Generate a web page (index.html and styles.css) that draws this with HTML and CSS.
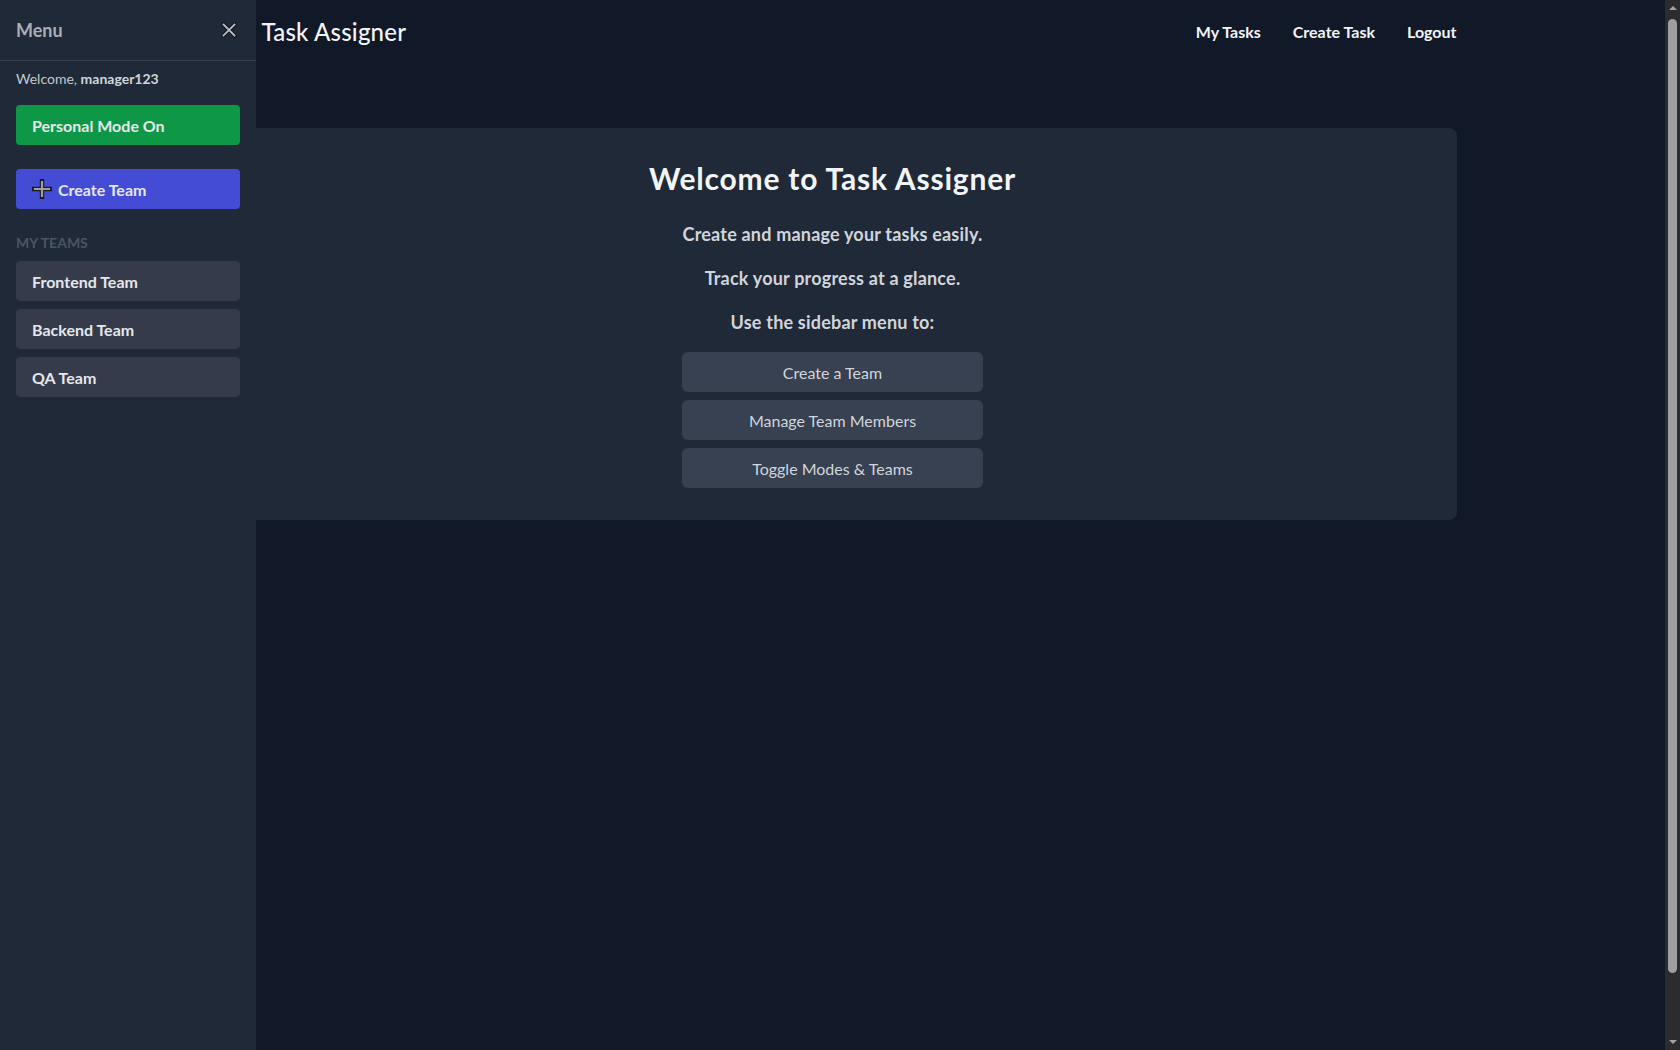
FILE: index.html
```html
<!DOCTYPE html>
<html lang="en">
<head>
<meta charset="utf-8">
<title>Task Assigner</title>
<link rel="stylesheet" href="styles.css">
</head>
<body>
<div class="page">
<header class="topbar">
  <div class="topbar-inner">
    <div class="brand">
      <button class="burger" aria-label="Open menu">
        <svg width="24" height="24" viewBox="0 0 24 24" fill="none" stroke="currentColor" stroke-width="2"><path d="M4 6h16M4 12h16M4 18h16"/></svg>
      </button>
      <span class="brand-title">Task Assigner</span>
    </div>
    <nav class="nav">
      <a class="nav-link" href="#">My Tasks</a>
      <a class="nav-link" href="#">Create Task</a>
      <a class="nav-link" href="#">Logout</a>
    </nav>
  </div>
</header>

<main class="main">
  <section class="card">
    <h1 class="card-title">Welcome to Task Assigner</h1>
    <p class="card-text">Create and manage your tasks easily.</p>
    <p class="card-text">Track your progress at a glance.</p>
    <p class="card-text">Use the sidebar menu to:</p>
    <div class="card-actions">
      <button class="action">Create a Team</button>
      <button class="action">Manage Team Members</button>
      <button class="action">Toggle Modes &amp; Teams</button>
    </div>
  </section>
</main>
</div>

<aside class="sidebar">
  <div class="sidebar-head">
    <span class="sidebar-title">Menu</span>
    <button class="close" aria-label="Close menu">
      <svg width="16" height="16" viewBox="0 0 16 16">
        <path d="M2.5 2.5 L13.5 13.5 M13.5 2.5 L2.5 13.5" stroke="#111" stroke-width="3.6" stroke-linecap="square"/>
        <path d="M2.5 2.5 L13.5 13.5 M13.5 2.5 L2.5 13.5" stroke="#b8bcc4" stroke-width="1.8" stroke-linecap="square"/>
      </svg>
    </button>
  </div>
  <div class="sidebar-body">
    <p class="welcome">Welcome, <strong>manager123</strong></p>
    <button class="btn btn-green">Personal Mode On</button>
    <button class="btn btn-indigo">
      <svg class="plus" width="20" height="20" viewBox="0 0 20 20">
        <path d="M10 2 V18 M2 10 H18" stroke="#1a1a1a" stroke-width="4.4" stroke-linecap="square"/>
        <path d="M10 3 V17 M3 10 H17" stroke="#a0a0a0" stroke-width="2.2" stroke-linecap="square"/>
      </svg>
      Create Team
    </button>
    <h2 class="section-label">My Teams</h2>
    <ul class="team-list">
      <li><button class="btn btn-team">Frontend Team</button></li>
      <li><button class="btn btn-team">Backend Team</button></li>
      <li><button class="btn btn-team">QA Team</button></li>
    </ul>
  </div>
</aside>

<div class="scrollbar" aria-hidden="true">
  <span class="sb-arrow sb-up"></span>
  <span class="sb-thumb"></span>
  <span class="sb-arrow sb-down"></span>
</div>
</body>
</html>
```

FILE: styles.css
```css
* { box-sizing: border-box; }

html, body {
  margin: 0;
  padding: 0;
}

body {
  background: #111827;
  color: #e5e7eb;
  font-family: "Lato", "Noto Sans", "Liberation Sans", sans-serif;
}

.page {
  margin-right: 15px;
  min-height: calc(100vh + 92px);
}

button {
  font-family: inherit;
  cursor: pointer;
}

/* Header */
.topbar-inner {
  max-width: 1280px;
  margin: 0 auto;
  padding: 0 16px;
  height: 64px;
  display: flex;
  align-items: center;
  justify-content: space-between;
}

.brand {
  display: flex;
  align-items: center;
  gap: 13px;
}

.burger {
  width: 40px;
  height: 40px;
  padding: 8px;
  background: transparent;
  border: 0;
  color: #e5e7eb;
}

.brand-title {
  font-size: 24px;
  font-weight: 500;
  color: #f3f4f6;
  line-height: 32px;
  letter-spacing: 0.2px;
}

.nav {
  display: flex;
  gap: 32px;
}

.nav-link {
  color: #f3f4f6;
  text-decoration: none;
  font-size: 16px;
  font-weight: 700;
  line-height: 24px;
}

/* Main */
.main {
  max-width: 1280px;
  margin: 0 auto;
  padding: 64px 16px 0;
}

.card {
  background: #1f2937;
  border-radius: 8px;
  padding: 32px;
  text-align: center;
}

.card-title {
  margin: 0 0 24px;
  font-size: 30px;
  line-height: 36px;
  font-weight: 700;
  color: #f3f4f6;
  letter-spacing: 0.8px;
}

.card-text {
  margin: 0 0 16px;
  font-size: 18px;
  line-height: 28px;
  font-weight: 700;
  color: #d1d5db;
  letter-spacing: 0.2px;
}

.card-actions {
  display: flex;
  flex-direction: column;
  align-items: center;
  gap: 8px;
}

.action {
  width: 301px;
  height: 40px;
  background: #374151;
  color: #d1d5db;
  border: 0;
  border-radius: 6px;
  font-size: 16px;
  font-weight: 400;
}

/* Sidebar */
.sidebar {
  position: fixed;
  top: 0;
  left: 0;
  width: 256px;
  height: 100vh;
  background: #1f2937;
  z-index: 10;
}

.sidebar-head {
  height: 61px;
  padding: 0 16px;
  display: flex;
  align-items: center;
  justify-content: space-between;
  border-bottom: 1px solid #374151;
}

.sidebar-title {
  font-size: 18px;
  font-weight: 700;
  color: #a9aeb7;
}

.close {
  background: transparent;
  border: 0;
  padding: 0;
  width: 16px;
  height: 16px;
  margin-right: 3px;
  display: flex;
}

.sidebar-body {
  padding: 8px 16px;
}

.welcome {
  margin: 0 0 16px;
  font-size: 14px;
  line-height: 20px;
  color: #c4c8cf;
}

.welcome strong {
  font-weight: 700;
  color: #d1d5db;
}

.btn {
  display: flex;
  align-items: center;
  width: 100%;
  height: 40px;
  padding: 0 16px;
  border: 0;
  border-radius: 4px;
  font-size: 16px;
  font-weight: 700;
  text-align: left;
}

.btn-green {
  background: #0f9748;
  color: #e5e7eb;
  margin-bottom: 24px;
}

.btn-indigo {
  background: #444cd6;
  color: #e5e7eb;
  gap: 6px;
  margin-bottom: 24px;
}

.plus {
  flex: none;
}

.section-label {
  margin: 0 0 8px;
  font-size: 14px;
  line-height: 20px;
  font-weight: 700;
  text-transform: uppercase;
  color: #4b5563;
}

.team-list {
  list-style: none;
  margin: 0;
  padding: 0;
  display: flex;
  flex-direction: column;
  gap: 8px;
}

.btn-team {
  background: #353b4a;
  color: #e5e7eb;
}

/* Window scrollbar (drawn, as in the screenshot) */
.scrollbar {
  position: fixed;
  top: 0;
  right: 0;
  width: 15px;
  height: 100vh;
  background: #2c2c2c;
  display: flex;
  flex-direction: column;
  align-items: center;
  z-index: 20;
}

.sb-arrow {
  flex: none;
  width: 0;
  height: 0;
  border-left: 4px solid transparent;
  border-right: 4px solid transparent;
}

.sb-up {
  margin-top: 6px;
  border-bottom: 4px solid #a3a3a3;
}

.sb-down {
  margin-top: auto;
  margin-bottom: 6px;
  border-top: 4px solid #a3a3a3;
}

.sb-thumb {
  width: 9px;
  height: 954px;
  margin-top: 9px;
  background: #9f9f9f;
  border-radius: 5px;
  flex: none;
}
```
